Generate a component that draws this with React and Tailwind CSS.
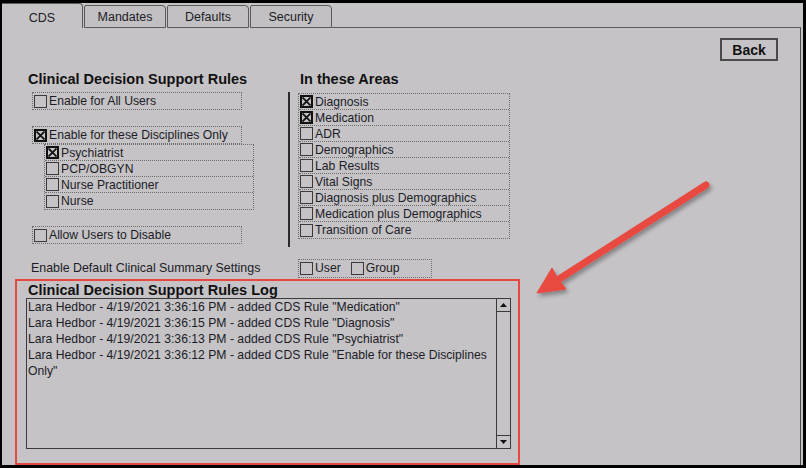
import React from 'react';

const Check = ({ checked }) => (
  <span
    className={`w-[13px] h-[13px] shrink-0 flex items-center justify-center bg-[#c5c3c6] ${
      checked ? 'border-2 border-[#111]' : 'border border-[#3a3a3a]'
    }`}
  >
    {checked && (
      <svg width="9" height="9" viewBox="0 0 9 9">
        <path d="M0.5 0.5L8.5 8.5M8.5 0.5L0.5 8.5" stroke="#111" strokeWidth="1.8" />
      </svg>
    )}
  </span>
);

const Row = ({ label, checked, last }) => (
  <div
    className={`h-[16px] flex items-center gap-[2px] pl-[1px] ${
      last ? '' : 'border-b border-dotted border-[#6e6e6e]'
    }`}
  >
    <Check checked={checked} />
    <span className="leading-[14px]">{label}</span>
  </div>
);

const DotBox = ({ children, className = '' }) => (
  <div className={`border border-dotted border-[#6e6e6e] ${className}`}>{children}</div>
);

const disciplines = [
  { label: 'Psychiatrist', checked: true },
  { label: 'PCP/OBGYN' },
  { label: 'Nurse Practitioner' },
  { label: 'Nurse' },
];

const areas = [
  { label: 'Diagnosis', checked: true },
  { label: 'Medication', checked: true },
  { label: 'ADR' },
  { label: 'Demographics' },
  { label: 'Lab Results' },
  { label: 'Vital Signs' },
  { label: 'Diagnosis plus Demographics' },
  { label: 'Medication plus Demographics' },
  { label: 'Transition of Care' },
];

const logLines = [
  'Lara Hedbor - 4/19/2021 3:36:16 PM - added CDS Rule "Medication"',
  'Lara Hedbor - 4/19/2021 3:36:15 PM - added CDS Rule "Diagnosis"',
  'Lara Hedbor - 4/19/2021 3:36:13 PM - added CDS Rule "Psychiatrist"',
  'Lara Hedbor - 4/19/2021 3:36:12 PM - added CDS Rule "Enable for these Disciplines Only"',
];

const tabs = ['Mandates', 'Defaults', 'Security'];

export default function App() {
  return (
    <div className="w-[806px] h-[468px] bg-black pt-[3px] pl-[2px] pr-[3px] pb-[3px] font-['Liberation_Sans',Arial,sans-serif] text-[12.2px] text-[#1c1c26]">
      <div className="relative w-full h-full bg-[#c5c3c6] flex flex-col pr-[2px]">
        {/* tabs */}
        <div className="h-[25px] flex items-end shrink-0">
          <div className="w-[81px] h-[25px] border-t border-r border-[#5a5a5a] rounded-tr-[4px] flex items-center justify-center text-[12.5px] pt-[4px]">
            CDS
          </div>
          {tabs.map((t) => (
            <div
              key={t}
              className="w-[82px] h-[23px] ml-[1px] border border-[#5a5a5a] rounded-tr-[4px] rounded-tl-[2px] bg-[#c2c0c3] flex items-center justify-center text-[12.5px] pt-[2px]"
            >
              {t}
            </div>
          ))}
          <div className="flex-1 h-[1px] bg-[#5a5a5a]" />
        </div>

        {/* panel */}
        <div className="flex-1 border-r border-[#4a4a4a] flex flex-col">
          <div className="flex justify-end pr-[22px] mt-[10px]">
            <button className="w-[58px] h-[23px] border-2 border-[#4a4a4a] bg-[#c5c3c6] font-bold text-[14px] text-[#111] leading-none">
              Back
            </button>
          </div>

          <div className="flex mt-[10px] pl-[26px]">
            <div className="w-[260px] flex flex-col">
              <div className="font-bold text-[14.5px] leading-[16px] text-[#111]">Clinical Decision Support Rules</div>
              <DotBox className="ml-[4px] mt-[5px] w-[210px]">
                <Row label="Enable for All Users" last />
              </DotBox>
              <DotBox className="ml-[4px] mt-[16px] w-[210px]">
                <Row label="Enable for these Disciplines Only" checked last />
              </DotBox>
              <DotBox className="ml-[16px] w-[210px]">
                {disciplines.map((d, i) => (
                  <Row key={d.label} {...d} last={i === disciplines.length - 1} />
                ))}
              </DotBox>
              <DotBox className="ml-[4px] mt-[16px] w-[210px]">
                <Row label="Allow Users to Disable" last />
              </DotBox>
            </div>
            <div className="w-[2px] h-[155px] mt-[21px] bg-[#2a2a2a]" />
            <div className="ml-[8px] flex flex-col">
              <div className="pl-[2px] font-bold text-[14.5px] leading-[16px] text-[#111]">In these Areas</div>
              <DotBox className="mt-[6px] w-[212px]">
                {areas.map((a, i) => (
                  <Row key={a.label} {...a} last={i === areas.length - 1} />
                ))}
              </DotBox>
            </div>
          </div>

          <div className="flex items-center mt-[12px] pl-[29px]">
            <div className="w-[267px] text-[12.4px]">Enable Default Clinical Summary Settings</div>
            <DotBox className="w-[134px] h-[19px] flex items-center gap-[2px] pl-[1px]">
              <Check />
              <span>User</span>
              <span className="ml-[8px]">
                <Check />
              </span>
              <span>Group</span>
            </DotBox>
          </div>

          <div className="ml-[13px] mt-[1px] w-[505px] h-[186px] border-2 border-[#e8473f] flex flex-col">
            <div className="pl-[11px] pt-[2px] font-bold text-[14.5px] leading-[15px] text-[#111]">
              Clinical Decision Support Rules Log
            </div>
            <div className="ml-[9px] w-[485px] h-[151px] border border-[#3a3a3a] flex">
              <div className="flex-1 pl-[1px] pr-[4px] leading-[16px]">
                {logLines.map((l) => (
                  <div key={l}>{l}</div>
                ))}
              </div>
              <div className="w-[14px] border-l border-[#3a3a3a] flex flex-col justify-between">
                <div className="h-[13px] border-b border-[#3a3a3a] flex items-center justify-center">
                  <svg width="7" height="4" viewBox="0 0 7 4">
                    <path d="M0 4L3.5 0L7 4Z" fill="#111" />
                  </svg>
                </div>
                <div className="h-[13px] border-t border-[#3a3a3a] flex items-center justify-center">
                  <svg width="7" height="4" viewBox="0 0 7 4">
                    <path d="M0 0L3.5 4L7 0Z" fill="#111" />
                  </svg>
                </div>
              </div>
            </div>
          </div>
        </div>

        {/* annotation arrow */}
        <svg className="absolute left-0 top-0 pointer-events-none" width="801" height="462" viewBox="2 3 801 462">
          <defs>
            <filter id="sh" x="-20%" y="-20%" width="140%" height="140%">
              <feDropShadow dx="2" dy="3" stdDeviation="2" floodColor="#000" floodOpacity="0.35" />
            </filter>
          </defs>
          <g filter="url(#sh)" fill="#e8483f" stroke="#e8483f">
            <line x1="706" y1="185" x2="556" y2="281" strokeWidth="7" strokeLinecap="round" />
            <path d="M537 293 L552 268 L558 279 L566 289 Z" strokeWidth="1" strokeLinejoin="round" />
          </g>
        </svg>
      </div>
    </div>
  );
}
